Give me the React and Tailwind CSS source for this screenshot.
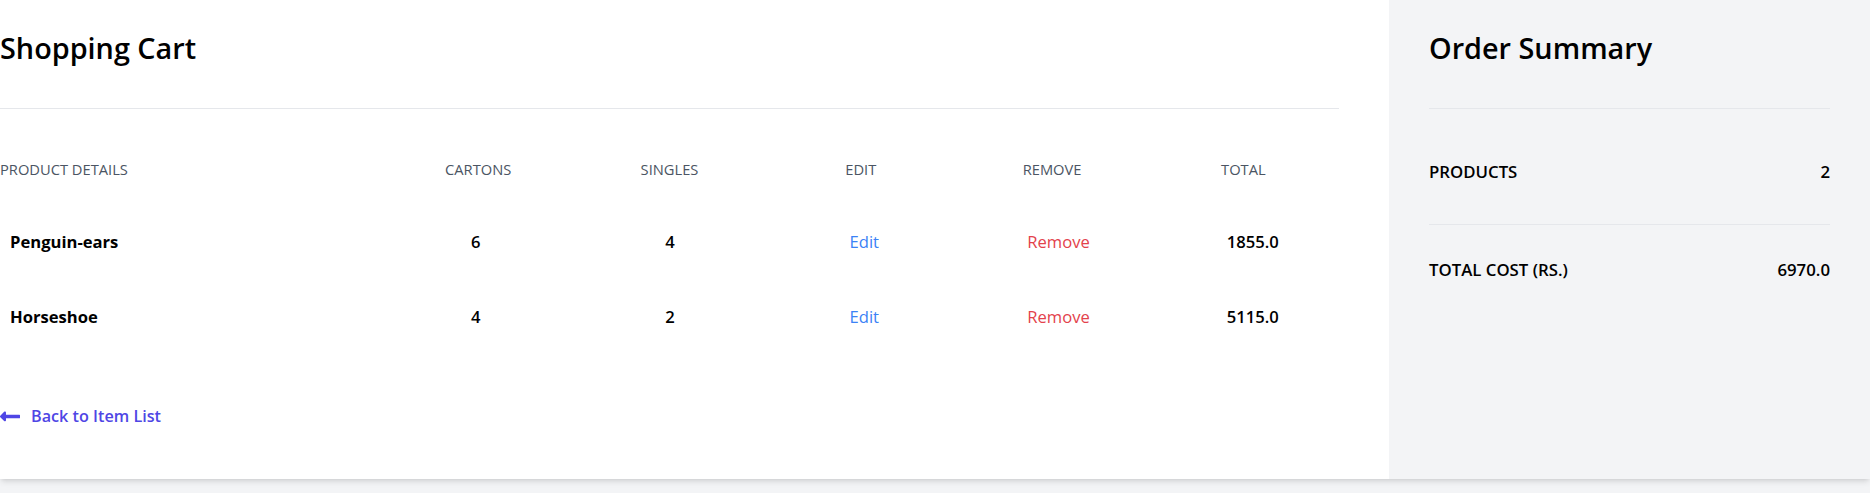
import React from "react";

const items = [
  { name: "Penguin-ears", cartons: 6, singles: 4, total: "1855.0" },
  { name: "Horseshoe", cartons: 4, singles: 2, total: "5115.0" },
];

export default function App() {
  return (
    <div
      className="min-h-screen bg-[#f3f4f6] text-black"
      style={{ fontFamily: '"Open Sans", "Noto Sans", sans-serif' }}
    >
      <div className="flex bg-white shadow-md">
        <div className="w-[1389px] shrink-0 pr-[50px] pt-[28px] pb-[50px]">
          <div className="border-b border-[#e5e7eb] pb-[40px]">
            <h1 className="text-[28.8px] leading-[40px] font-semibold">Shopping Cart</h1>
          </div>
          <div className="grid grid-cols-7 mt-[50px] mb-[25px] text-[14.7px] leading-[20px] text-[#4b5563] uppercase">
            <h3 className="col-span-2">Product Details</h3>
            <h3 className="text-center">Cartons</h3>
            <h3 className="text-center">Singles</h3>
            <h3 className="text-center">Edit</h3>
            <h3 className="text-center">Remove</h3>
            <h3 className="text-center">Total</h3>
          </div>
          {items.map((it) => (
            <div
              key={it.name}
              className="grid grid-cols-7 items-center -ml-[10px] -mr-[11px] py-[25px] text-[16.6px] leading-[25px] font-semibold"
            >
              <div className="col-span-2 pl-[20px] font-bold">{it.name}</div>
              <div className="text-center">{it.cartons}</div>
              <div className="text-center">{it.singles}</div>
              <div className="text-center">
                <a className="text-[#3b82f6] font-medium">Edit</a>
              </div>
              <div className="text-center">
                <a className="text-[#e3424b] font-medium">Remove</a>
              </div>
              <div className="text-center">{it.total}</div>
            </div>
          ))}
          <a className="flex items-center mt-[50px] text-[#4f46e5] font-semibold text-[16.2px] leading-[25px]">
            <svg className="w-[20px] mr-[11px] fill-current" viewBox="0 0 448 512">
              <path d="M134.059 296H436c6.627 0 12-5.373 12-12v-56c0-6.627-5.373-12-12-12H134.059v-46.059c0-21.382-25.851-32.09-40.971-16.971L7.029 239.029c-9.373 9.373-9.373 24.569 0 33.941l86.059 86.059c15.119 15.119 40.971 4.411 40.971-16.971V296z" />
            </svg>
            Back to Item List
          </a>
        </div>
        <div className="flex-1 bg-[#f3f4f6] px-[40px] pt-[28px] pb-[50px]">
          <h1 className="border-b border-[#e5e7eb] pb-[40px] text-[28.8px] leading-[40px] font-semibold">
            Order Summary
          </h1>
          <div className="flex justify-between mt-[50px] text-[16.8px] leading-[25px] font-semibold uppercase">
            <span>Products</span>
            <span>2</span>
          </div>
          <div className="border-t border-[#e5e7eb] mt-[40px]">
            <div className="flex justify-between pt-[32px] text-[16.8px] leading-[25px] font-semibold uppercase">
              <span>Total cost (Rs.)</span>
              <span>6970.0</span>
            </div>
          </div>
        </div>
      </div>
    </div>
  );
}
